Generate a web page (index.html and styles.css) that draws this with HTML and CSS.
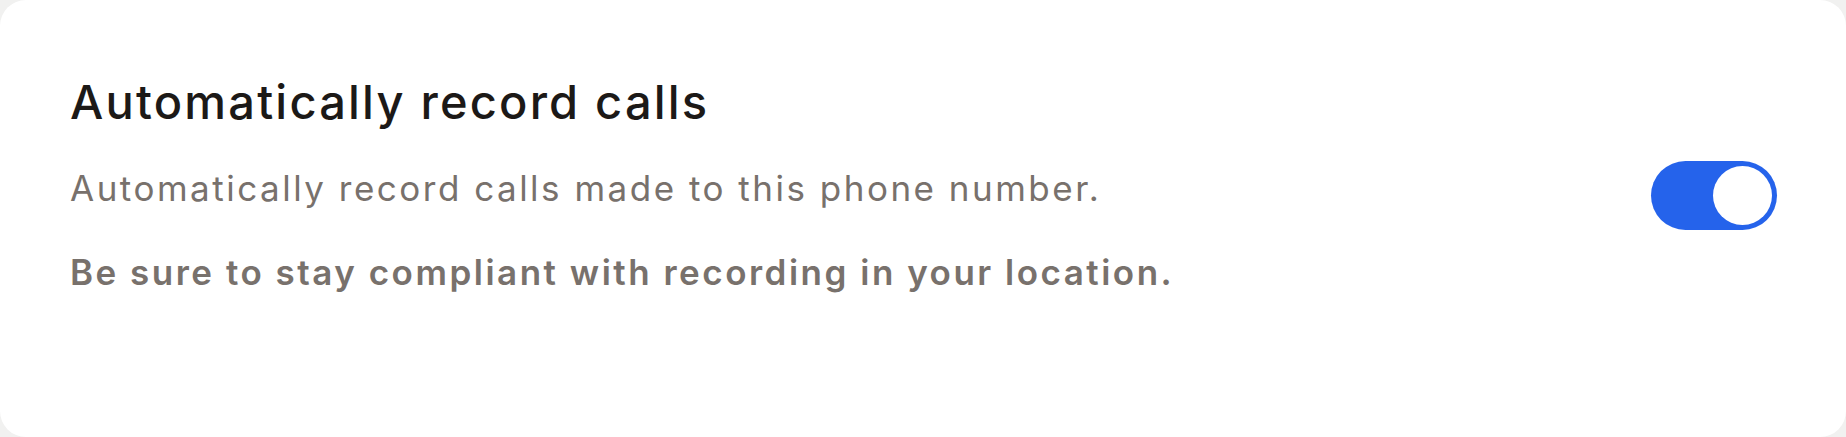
FILE: index.html
```html
<!DOCTYPE html>
<html lang="en">
<head>
    <meta charset="UTF-8">
    <meta name="viewport" content="width=device-width, initial-scale=1.0">
    <title>Call recording</title>
    <link rel="stylesheet" href="styles.css">
</head>
<body>
    <section class="setting-card">
        <h2 class="setting-title">Automatically record calls</h2>
        <div class="setting-row">
            <div class="setting-text">
                <p class="setting-desc">Automatically record calls made to this phone number.</p>
                <p class="setting-note">Be sure to stay compliant with recording in your location.</p>
            </div>
            <button class="toggle is-on" id="recordToggle" role="switch" aria-checked="true">
                <span class="toggle-knob"></span>
            </button>
        </div>
    </section>

    <script>
        const recordToggle = document.getElementById('recordToggle');

        recordToggle.addEventListener('click', () => {
            const on = recordToggle.classList.toggle('is-on');
            recordToggle.setAttribute('aria-checked', on);
        });
    </script>
</body>
</html>
```

FILE: styles.css
```css
:root {
    --page-bg: #f1f1f0;
    --card-bg: #ffffff;
    --title-color: #1c1917;
    --muted-color: #78716c;
    --accent-color: #2563eb;
    --toggle-off: #d6d3d1;
}

* {
    box-sizing: border-box;
}

body {
    margin: 0;
    height: 100vh;
    background-color: var(--page-bg);
    font-family: 'Inter', 'Noto Sans', sans-serif;
}

.setting-card {
    height: 100%;
    background-color: var(--card-bg);
    border-radius: 26px;
    padding: 72px 69px 0 70px;
}

.setting-title {
    margin: 0;
    font-size: 47px;
    font-weight: 500;
    line-height: 60px;
    letter-spacing: 2.2px;
    color: var(--title-color);
}

.setting-row {
    display: flex;
    justify-content: space-between;
    align-items: flex-start;
    margin-top: 34px;
}

.setting-desc,
.setting-note {
    margin: 0;
    font-size: 35px;
    line-height: 44px;
    letter-spacing: 2.5px;
    color: var(--muted-color);
}

.setting-note {
    margin-top: 40px;
    font-weight: 600;
}

.toggle {
    position: relative;
    flex-shrink: 0;
    width: 126px;
    height: 69px;
    margin-top: -5px;
    padding: 0;
    border: none;
    border-radius: 35px;
    background-color: var(--toggle-off);
    cursor: pointer;
    transition: background-color 0.2s ease;
}

.toggle.is-on {
    background-color: var(--accent-color);
}

/* つまみは状態に応じて左右に動く */
.toggle-knob {
    position: absolute;
    top: 5px;
    left: 5px;
    width: 59px;
    height: 59px;
    border-radius: 50%;
    background-color: #fff;
    transition: left 0.2s ease;
}

.toggle.is-on .toggle-knob {
    left: 62px;
}
```
